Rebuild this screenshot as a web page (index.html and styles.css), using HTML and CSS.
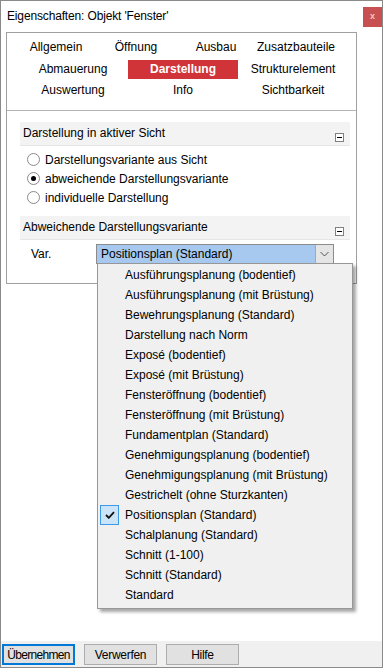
FILE: index.html
```html
<!DOCTYPE html>
<html lang="de">
<head>
<meta charset="utf-8">
<title>Eigenschaften: Objekt 'Fenster'</title>
<link rel="stylesheet" href="styles.css">
</head>
<body>
<div class="window">
  <div class="titlebar">
    <span class="title">Eigenschaften: Objekt 'Fenster'</span>
    <span class="close">x</span>
  </div>
  <div class="panel">
    <div class="tabs">
      <div class="tabrow four">
        <span class="tab">Allgemein</span>
        <span class="tab">Öffnung</span>
        <span class="tab">Ausbau</span>
        <span class="tab">Zusatzbauteile</span>
      </div>
      <div class="tabrow three second">
        <span class="tab">Abmauerung</span>
        <span class="tab active">Darstellung</span>
        <span class="tab">Strukturelement</span>
      </div>
      <div class="tabrow three third">
        <span class="tab">Auswertung</span>
        <span class="tab">Info</span>
        <span class="tab">Sichtbarkeit</span>
      </div>
    </div>
    <div class="content">
      <div class="band first">
        <span>Darstellung in aktiver Sicht</span>
        <span class="collapse"></span>
      </div>
      <div class="radios">
        <div class="radio"><span class="circle"></span><span>Darstellungsvariante aus Sicht</span></div>
        <div class="radio"><span class="circle checked"></span><span>abweichende Darstellungsvariante</span></div>
        <div class="radio"><span class="circle"></span><span>individuelle Darstellung</span></div>
      </div>
      <div class="band second">
        <span>Abweichende Darstellungsvariante</span>
        <span class="collapse"></span>
      </div>
      <div class="varrow">
        <span class="varlabel">Var.</span>
        <div class="combo">
          <span class="combotext">Positionsplan (Standard)</span>
          <span class="arrow"><svg width="9" height="6" viewBox="0 0 9 6"><path d="M0.5 1 L4.5 5 L8.5 1" fill="none" stroke="#555" stroke-width="1"/></svg></span>
        </div>
      </div>
    </div>
  </div>
  <div class="list">
    <div class="item">Ausführungsplanung (bodentief)</div>
    <div class="item">Ausführungsplanung (mit Brüstung)</div>
    <div class="item">Bewehrungsplanung (Standard)</div>
    <div class="item">Darstellung nach Norm</div>
    <div class="item">Exposé (bodentief)</div>
    <div class="item">Exposé (mit Brüstung)</div>
    <div class="item">Fensteröffnung (bodentief)</div>
    <div class="item">Fensteröffnung (mit Brüstung)</div>
    <div class="item">Fundamentplan (Standard)</div>
    <div class="item">Genehmigungsplanung (bodentief)</div>
    <div class="item">Genehmigungsplanung (mit Brüstung)</div>
    <div class="item">Gestrichelt (ohne Sturzkanten)</div>
    <div class="item selected"><span class="check"><svg width="10" height="8" viewBox="0 0 10 8"><path d="M1 4 L3.8 6.8 L9 1.2" fill="none" stroke="#111" stroke-width="1.8"/></svg></span>Positionsplan (Standard)</div>
    <div class="item">Schalplanung (Standard)</div>
    <div class="item">Schnitt (1-100)</div>
    <div class="item">Schnitt (Standard)</div>
    <div class="item">Standard</div>
  </div>
  <div class="buttons">
    <button class="btn default">Übernehmen</button>
    <button class="btn">Verwerfen</button>
    <button class="btn">Hilfe</button>
  </div>
</div>
</body>
</html>
```
FILE: styles.css
```css
* { box-sizing: border-box; }
html, body { margin: 0; padding: 0; }
body {
  font-family: "Liberation Sans", Arial, sans-serif;
  font-size: 12px;
  color: #000;
  background: #fff;
}
.window {
  position: relative;
  width: 383px;
  height: 668px;
  border: 1px solid #8a8a8a;
  background: #fff;
  display: flex;
  flex-direction: column;
}
.titlebar {
  height: 31px;
  display: flex;
  align-items: flex-start;
  justify-content: space-between;
}
.title {
  margin: 8px 0 0 6px;
  line-height: 15px;
  letter-spacing: -0.15px;
}
.close {
  margin-top: 6px;
  width: 19px;
  height: 20px;
  background: #c75050;
  color: #f0c4c4;
  font-weight: bold;
  font-size: 9px;
  line-height: 19px;
  text-align: center;
}
.panel {
  margin-left: 5px;
  width: 351px;
  height: 252px;
  border: 1px solid #a0a0a0;
}
.tabs {
  height: 78px;
  border-bottom: 1px solid #b4b4b4;
  padding-top: 5px;
}
.tabrow {
  display: flex;
  height: 19px;
}
.tabrow.four { margin-left: 9px; }
.tabrow.four .tab { width: 80px; }
.tabrow.three { margin-left: 11px; }
.tabrow.three .tab { width: 110px; }
.tabrow.second { margin-top: 3px; }
.tabrow.third { margin-top: 2px; }
.tab {
  text-align: center;
  line-height: 19px;
  white-space: nowrap;
}
.tab.active {
  background: #d13438;
  color: #fff;
  font-weight: bold;
}
.content {
  padding: 0 6px 0 13px;
}
.band {
  height: 24px;
  background: #f3f3f3;
  border-bottom: 1px solid #e6e6e6;
  display: flex;
  justify-content: space-between;
  padding: 0 6px 0 3px;
  line-height: 22px;
}
.band.first { margin-top: 11px; }
.band.second { margin-top: 9px; }
.collapse {
  position: relative;
  width: 9px;
  height: 9px;
  margin-top: 11px;
  border: 1px solid #808080;
  background: #fff;
}
.collapse::after {
  content: "";
  position: absolute;
  left: 1px;
  top: 3px;
  width: 5px;
  height: 1px;
  background: #000;
}
.radios {
  margin-top: 4px;
  padding-left: 7px;
}
.radio {
  height: 19px;
  display: flex;
  align-items: center;
}
.circle {
  width: 13px;
  height: 13px;
  border-radius: 50%;
  border: 1px solid #8a8a8a;
  background: #fff;
  margin-right: 5px;
  display: flex;
  align-items: center;
  justify-content: center;
}
.circle.checked::after {
  content: "";
  width: 5px;
  height: 5px;
  border-radius: 50%;
  background: #000;
}
.varrow {
  margin-top: 4px;
  display: flex;
  align-items: center;
  padding-left: 11px;
}
.varlabel { width: 65px; }
.combo {
  width: 238px;
  height: 20px;
  border: 1px solid #8c8c8c;
  display: flex;
}
.combotext {
  flex: 1;
  background: #a7c9ef;
  padding-left: 4px;
  line-height: 18px;
}
.arrow {
  width: 18px;
  background: #e5e5e5;
  border-left: 1px solid #a8a8a8;
  display: flex;
  align-items: center;
  justify-content: center;
}
.list {
  position: absolute;
  left: 96px;
  top: 262px;
  width: 256px;
  height: 346px;
  background: #f0f0f0;
  border: 1px solid #979797;
  box-shadow: 3px 3px 3px rgba(0,0,0,0.35);
  padding-top: 1px;
}
.item {
  position: relative;
  height: 20px;
  line-height: 20px;
  padding-left: 27px;
  white-space: nowrap;
}
.check {
  position: absolute;
  left: 2px;
  top: 0;
  width: 19px;
  height: 20px;
  background: #cce4f7;
  border: 1px solid #3d9ae6;
  display: flex;
  align-items: center;
  justify-content: center;
}
.buttons {
  margin-top: auto;
  height: 26px;
  background: #f0f0f0;
  display: flex;
  gap: 9px;
  padding: 3px 0 0 1px;
}
.btn {
  width: 73px;
  height: 21px;
  font-family: inherit;
  font-size: 12px;
  letter-spacing: -0.3px;
  color: #000;
  background: #e1e1e1;
  border: 1px solid #adadad;
  padding: 0;
  margin: 0;
  white-space: nowrap;
}
.btn.default {
  border: 2px solid #0078d7;
  letter-spacing: -0.7px;
}
```
